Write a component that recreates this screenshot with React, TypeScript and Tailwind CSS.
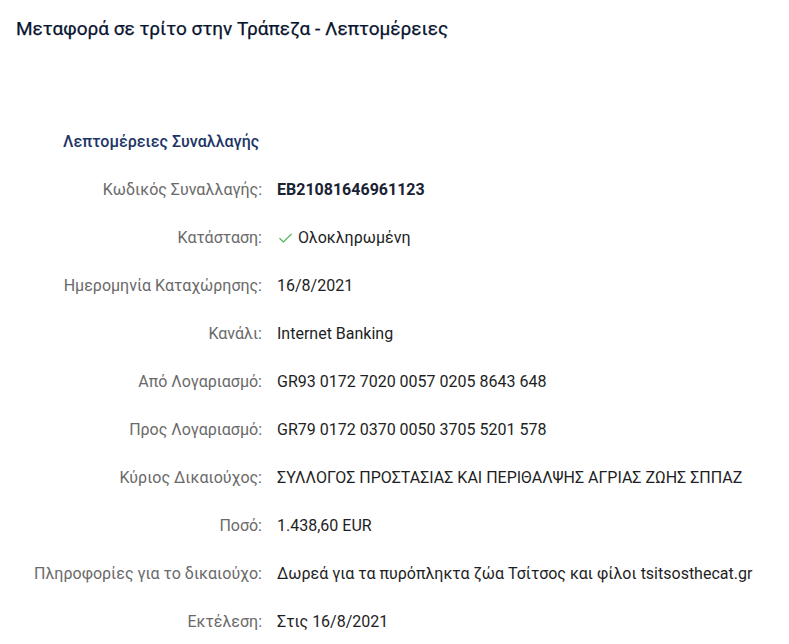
import { Check } from "lucide-react";

type Row = { label: string; value: string; bold?: boolean; ok?: boolean };

const ROWS: Row[] = [
  { label: "Κωδικός Συναλλαγής:", value: "EB21081646961123", bold: true },
  { label: "Κατάσταση:", value: "Ολοκληρωμένη", ok: true },
  { label: "Ημερομηνία Καταχώρησης:", value: "16/8/2021" },
  { label: "Κανάλι:", value: "Internet Banking" },
  { label: "Από Λογαριασμό:", value: "GR93 0172 7020 0057 0205 8643 648" },
  { label: "Προς Λογαριασμό:", value: "GR79 0172 0370 0050 3705 5201 578" },
  { label: "Κύριος Δικαιούχος:", value: "ΣΥΛΛΟΓΟΣ ΠΡΟΣΤΑΣΙΑΣ ΚΑΙ ΠΕΡΙΘΑΛΨΗΣ ΑΓΡΙΑΣ ΖΩΗΣ ΣΠΠΑΖ" },
  { label: "Ποσό:", value: "1.438,60 EUR" },
  { label: "Πληροφορίες για το δικαιούχο:", value: "Δωρεά για τα πυρόπληκτα ζώα Τσίτσος και φίλοι tsitsosthecat.gr" },
  { label: "Εκτέλεση:", value: "Στις 16/8/2021" },
];

export default function App() {
  return (
    <div className="min-h-[644px] w-[789px] bg-white font-['Roboto',sans-serif] overflow-hidden">
      <h1 className="px-4 pt-[16px] text-[19px] leading-[26px] text-[#081530] [-webkit-text-stroke:0.25px_#081530]">
        Μεταφορά σε τρίτο στην Τράπεζα - Λεπτομέρειες
      </h1>

      <h2 className="mt-[90px] pl-[63px] text-[16px] leading-[20px] font-medium text-[#1d3566]">
        Λεπτομέρειες Συναλλαγής
      </h2>

      <div className="mt-[14px] flex flex-col">
        {ROWS.map((r) => (
          <div key={r.label} className="flex h-12 items-center text-[16px] whitespace-nowrap">
            <div className="w-[262px] text-right text-[#6a6a6a]">{r.label}</div>
            <div className={`ml-[15px] flex items-center ${r.bold ? "font-bold text-[#1a2233]" : "text-[#1e1e24]"}`}>
              {r.ok && <Check className="mr-[4px] h-[17px] w-[17px] text-[#5cb85c]" strokeWidth={1.75} />}
              {r.value}
            </div>
          </div>
        ))}
      </div>
    </div>
  );
}
